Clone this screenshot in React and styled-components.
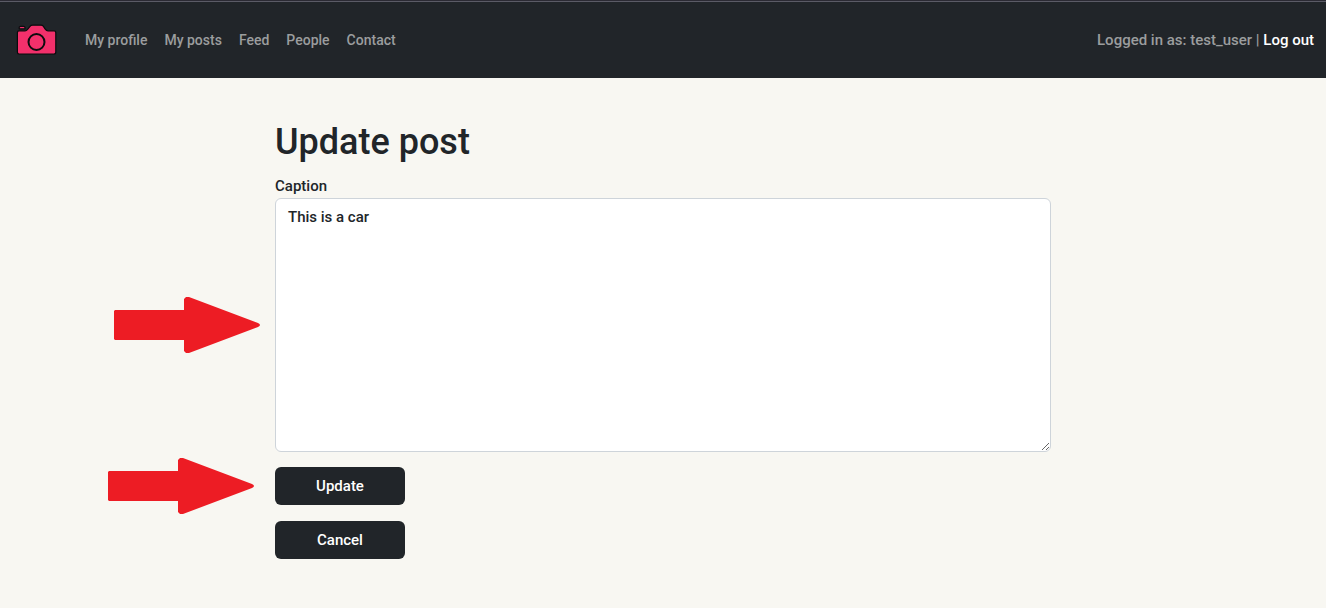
import React from 'react';
import styled, { createGlobalStyle } from 'styled-components';

const GlobalStyle = createGlobalStyle`
  *, *::before, *::after { box-sizing: border-box; }
  body {
    margin: 0;
    background: #f8f7f2;
    color: #212529;
    font: 500 15px/24px Roboto, "Liberation Sans", sans-serif;
  }
`;

const Navbar = styled.header`
  display: flex;
  align-items: center;
  height: 78px;
  padding: 2px 12px 0 16px;
  background: #212529;
  box-shadow: inset 0 1px #2b2a33, inset 0 2px #5b5b66;
  color: #9b9d9e;
`;

const Brand = styled.a`
  display: flex;
  margin-right: 28px;
`;

const Nav = styled.nav`
  display: flex;
  gap: 17px;
  flex: 1;
  font-size: 14px;
`;

const NavLink = styled.a`
  color: inherit;
  text-decoration: none;
`;

const LogoutLink = styled.a`
  color: #fff;
  text-decoration: none;
`;

const Main = styled.main`
  max-width: 800px;
  margin: 0 auto;
  padding: 40px 12px;
`;

const Title = styled.h1`
  margin: 0 0 8px;
  font-size: 36px;
  font-weight: 500;
  line-height: 48px;
`;

const Label = styled.label`
  display: block;
`;

const Field = styled.div`
  position: relative;
  margin-bottom: 15px;
`;

const TextArea = styled.textarea`
  display: block;
  width: 100%;
  padding: 6px 12px;
  border: 1px solid #ced4da;
  border-radius: 6px;
  background: #fff;
  color: inherit;
  font: inherit;
  resize: vertical;
`;

const Action = styled.div`
  position: relative;
  width: 130px;
  margin-bottom: 16px;
`;

const Button = styled.button`
  display: block;
  width: 100%;
  height: 38px;
  padding: 0 12px;
  border: 0;
  border-radius: 6px;
  background: #212529;
  color: #fff;
  font: inherit;
  cursor: pointer;
`;

const Pointer = styled.svg`
  position: absolute;
  top: 50%;
  right: 100%;
  margin: -28px ${(p) => p.$gap}px 0 0;
  pointer-events: none;
`;

function Arrow({ gap }) {
  return (
    <Pointer $gap={gap} width="146" height="56" viewBox="0 0 146 56" aria-hidden="true">
      <path
        d="M1 13H70V2L72 0H75L144 26Q146 27 146 28Q146 29 144 30L75 56H72L70 54V43H1L0 42V14Z"
        fill="#ed1c24"
      />
    </Pointer>
  );
}

function Camera() {
  return (
    <svg width="41" height="32" viewBox="0 0 41 32" aria-hidden="true">
      <g fill="#f2306b" stroke="#0b0b0d" strokeWidth="1.2" strokeLinejoin="round">
        <path d="M3.2 4.8V3.6Q3.2 2.4 4.6 2.4H7.6Q9 2.4 9 3.6V4.8Z" />
        <path d="M3 6.8H9Q10.5 6.8 11.6 5.4L14 2.4Q15 1.2 16.5 1.2H25Q26.5 1.2 27.4 2.4L29.4 5.4Q30.4 6.8 32 6.8H38Q39.8 6.8 39.8 8.8V28Q39.8 30 38 30H3Q1.4 30 1.4 28V8.8Q1.4 6.8 3 6.8Z" />
        <circle cx="20.5" cy="18" r="8" strokeWidth="2" />
      </g>
    </svg>
  );
}

const links = ['My profile', 'My posts', 'Feed', 'People', 'Contact'];

export default function App() {
  return (
    <>
      <GlobalStyle />
      <Navbar>
        <Brand href="#home" aria-label="Home">
          <Camera />
        </Brand>
        <Nav>
          {links.map((text) => (
            <NavLink key={text} href="#nav">{text}</NavLink>
          ))}
        </Nav>
        <span>
          Logged in as: test_user | <LogoutLink href="#logout">Log out</LogoutLink>
        </span>
      </Navbar>
      <Main>
        <Title>Update post</Title>
        <form onSubmit={(e) => e.preventDefault()}>
          <Label htmlFor="caption">Caption</Label>
          <Field>
            <TextArea id="caption" rows={10} defaultValue="This is a car" />
            <Arrow gap={15} />
          </Field>
          <Action>
            <Button type="submit">Update</Button>
            <Arrow gap={21} />
          </Action>
          <Action>
            <Button type="button">Cancel</Button>
          </Action>
        </form>
      </Main>
    </>
  );
}
